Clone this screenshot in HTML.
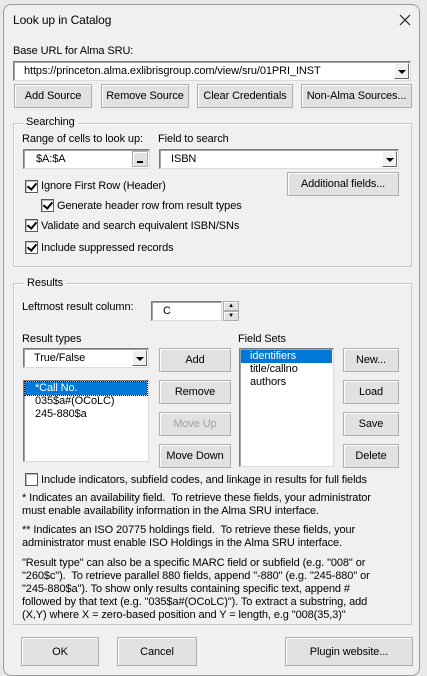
<!DOCTYPE html>
<html><head><meta charset="utf-8"><style>
*{box-sizing:border-box;margin:0;padding:0}
body{width:427px;height:670px;background:#e9e9e9;font-family:"Liberation Sans",Arial,sans-serif;font-size:11px;letter-spacing:-0.1px;color:#000;position:relative;overflow:hidden}
#win{position:absolute;left:3px;top:4px;width:417px;height:672px;background:#f0f0f0;border:1px solid #9a9a9a;border-radius:8px}
.a{position:absolute;white-space:nowrap}
.btn{position:absolute;background:#e1e1e1;border:1px solid #adadad;box-shadow:inset 1px 1px 0 #fff;display:flex;align-items:center;justify-content:center;font-size:11px}
.dis{color:#a0a0a0}
.in{position:absolute;background:#fff;border:1px solid #7a7a7a;border-right-color:#dcdcdc;border-bottom-color:#dcdcdc;box-shadow:inset 1px 1px 0 #a0a0a0}
.dd{position:absolute;width:15px;background:#f0f0f0;border:1px solid #fff;border-right-color:#696969;border-bottom-color:#696969}
.dd:after{content:"";position:absolute;left:3px;top:6px;border-left:4px solid transparent;border-right:4px solid transparent;border-top:4px solid #000}
.grp{position:absolute;border:1px solid #c8c8c8;box-shadow:inset 1px 1px 0 #fff}
.gl{position:absolute;background:#f0f0f0;padding:0 3px;font-size:11px}
.cb{position:absolute;width:13px;height:13px;background:#fff;border:1px solid #5a5a5a;box-shadow:inset 1px 1px 0 #bbb}
.cb.c:after{content:"";position:absolute;left:3px;top:0px;width:4px;height:7px;border:solid #000;border-width:0 2px 2px 0;transform:rotate(40deg)}
.p{position:absolute;left:22px;width:390px;line-height:13px;font-size:11px}
</style></head><body>
<div id="win"></div>
<div class="a" style="left:13px;top:13px;font-size:12px">Look up in Catalog</div>
<svg class="a" style="left:399px;top:14px" width="12" height="12"><path d="M1 1L11 11M11 1L1 11" stroke="#222" stroke-width="1.2"/></svg>
<div class="a" style="left:13px;top:45px">Base URL for Alma SRU:</div>
<div class="in" style="left:13px;top:61px;width:398px;height:20px"></div>
<div class="a" style="left:24px;top:65px">https://princeton.alma.exlibrisgroup.com/view/sru/01PRI_INST</div>
<div class="dd" style="left:394px;top:63px;height:16px"></div>
<div class="btn" style="left:14px;top:84px;width:78px;height:24px">Add Source</div>
<div class="btn" style="left:101px;top:84px;width:88px;height:24px">Remove Source</div>
<div class="btn" style="left:197px;top:84px;width:96px;height:24px">Clear Credentials</div>
<div class="btn" style="left:301px;top:84px;width:111px;height:24px">Non-Alma Sources...</div>

<div class="grp" style="left:13px;top:123px;width:399px;height:144px"></div>
<div class="gl" style="left:23px;top:116px">Searching</div>
<div class="a" style="left:22px;top:133px">Range of cells to look up:</div>
<div class="a" style="left:158px;top:133px">Field to search</div>
<div class="in" style="left:23px;top:149px;width:127px;height:20px"></div>
<div class="a" style="left:36px;top:153px">$A:$A</div>
<div class="btn" style="left:132px;top:151px;width:16px;height:16px;align-items:flex-end;padding-bottom:3px"><div style="width:6px;height:2px;background:#000"></div></div>
<div class="in" style="left:159px;top:149px;width:240px;height:20px"></div>
<div class="a" style="left:171px;top:153px">ISBN</div>
<div class="dd" style="left:382px;top:151px;height:16px"></div>
<div class="btn" style="left:287px;top:172px;width:112px;height:24px">Additional fields...</div>
<div class="cb c" style="left:25px;top:180px"></div><div class="a" style="left:41px;top:180px">Ignore First Row (Header)</div>
<div class="cb c" style="left:41px;top:199px"></div><div class="a" style="left:57px;top:200px">Generate header row from result types</div>
<div class="cb c" style="left:25px;top:219px"></div><div class="a" style="left:41px;top:220px">Validate and search equivalent ISBN/SNs</div>
<div class="cb c" style="left:25px;top:241px"></div><div class="a" style="left:41px;top:242px">Include suppressed records</div>

<div class="grp" style="left:13px;top:283px;width:399px;height:342px"></div>
<div class="gl" style="left:24px;top:277px">Results</div>
<div class="a" style="left:22px;top:301px">Leftmost result column:</div>
<div class="in" style="left:151px;top:301px;width:71px;height:20px"></div>
<div class="a" style="left:163px;top:305px">C</div>
<div class="btn" style="left:223px;top:301px;width:16px;height:10px;font-size:6px">▲</div>
<div class="btn" style="left:223px;top:311px;width:16px;height:10px;font-size:6px">▼</div>
<div class="a" style="left:22px;top:333px">Result types</div>
<div class="a" style="left:238px;top:333px">Field Sets</div>
<div class="in" style="left:23px;top:348px;width:126px;height:20px"></div>
<div class="a" style="left:34px;top:352px">True/False</div>
<div class="dd" style="left:132px;top:350px;height:16px"></div>
<div class="in" style="left:23px;top:380px;width:126px;height:82px"></div>
<div class="a" style="left:25px;top:382px;width:122px;height:13px;background:#0078d7;outline:1px dotted #000"></div>
<div class="a" style="left:35px;top:382px;color:#fff">*Call No.</div>
<div class="a" style="left:35px;top:395px">035$a#(OCoLC)</div>
<div class="a" style="left:35px;top:408px">245-880$a</div>
<div class="btn" style="left:159px;top:348px;width:72px;height:24px">Add</div>
<div class="btn" style="left:159px;top:380px;width:72px;height:24px">Remove</div>
<div class="btn dis" style="left:159px;top:412px;width:72px;height:24px">Move Up</div>
<div class="btn" style="left:159px;top:444px;width:72px;height:24px">Move Down</div>
<div class="in" style="left:239px;top:348px;width:95px;height:119px"></div>
<div class="a" style="left:241px;top:350px;width:91px;height:13px;background:#0078d7"></div>
<div class="a" style="left:250px;top:350px;color:#fff">identifiers</div>
<div class="a" style="left:250px;top:363px">title/callno</div>
<div class="a" style="left:250px;top:376px">authors</div>
<div class="btn" style="left:343px;top:348px;width:56px;height:24px">New...</div>
<div class="btn" style="left:343px;top:380px;width:56px;height:24px">Load</div>
<div class="btn" style="left:343px;top:412px;width:56px;height:24px">Save</div>
<div class="btn" style="left:343px;top:444px;width:56px;height:24px">Delete</div>
<div class="cb" style="left:25px;top:473px"></div><div class="a" style="left:41px;top:474px">Include indicators, subfield codes, and linkage in results for full fields</div>
<div class="p" style="top:492px">* Indicates an availability field.&nbsp; To retrieve these fields, your administrator<br>must enable availability information in the Alma SRU interface.</div>
<div class="p" style="top:524px">** Indicates an ISO 20775 holdings field.&nbsp; To retrieve these fields, your<br>administrator must enable ISO Holdings in the Alma SRU interface.</div>
<div class="p" style="top:557px">"Result type" can also be a specific MARC field or subfield (e.g. "008" or<br>"260$c").&nbsp; To retrieve parallel 880 fields, append "-880" (e.g. "245-880" or<br>"245-880$a"). To show only results containing specific text, append #<br>followed by that text (e.g. "035$a#(OCoLC)"). To extract a substring, add<br>(X,Y) where X = zero-based position and Y = length, e.g "008(35,3)"</div>
<div class="btn" style="left:21px;top:637px;width:78px;height:29px">OK</div>
<div class="btn" style="left:117px;top:637px;width:80px;height:29px">Cancel</div>
<div class="btn" style="left:285px;top:637px;width:128px;height:29px">Plugin website...</div>
</body></html>
